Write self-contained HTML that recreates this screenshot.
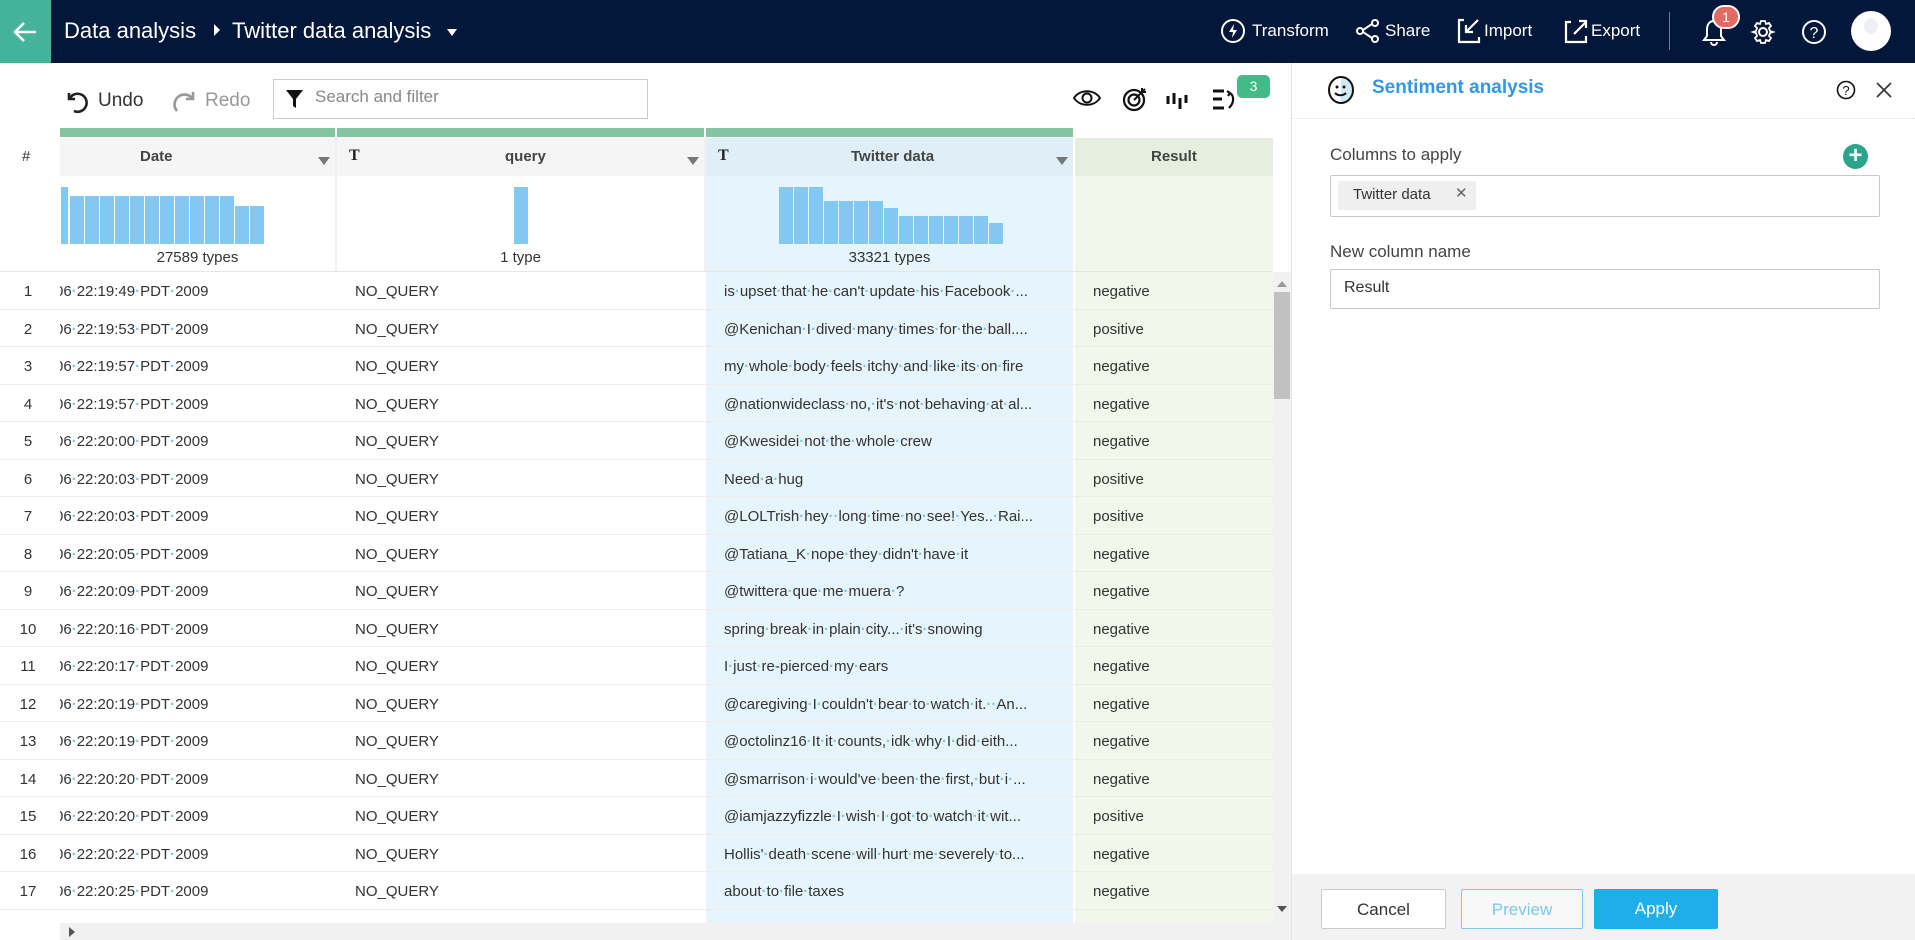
<!DOCTYPE html>
<html><head><meta charset="utf-8">
<style>
*{box-sizing:border-box;margin:0;padding:0}
body{width:1915px;height:940px;overflow:hidden;background:#fff;font-family:"Liberation Sans",sans-serif;color:#333;position:relative}
.a{position:absolute}
.hdr{left:0;top:0;width:1915px;height:63px;background:#03173a}
.hl{color:#fff;font-size:16px;top:21px}
.d{color:#7cc3ee}
.row{position:absolute;left:0;width:1273px;height:37.5px;border-bottom:1px solid #ececec;font-size:15px;line-height:40px}
.row span.n{position:absolute;left:0;width:56px;text-align:center}
.row .dt{position:absolute;left:60px;width:270px;overflow:hidden;white-space:nowrap;text-indent:-5px}
.row .q{position:absolute;left:355px}
.row .tw{position:absolute;left:724px;width:340px;white-space:nowrap;overflow:hidden}
.row .r{position:absolute;left:1093px}
.bar{position:absolute;background:#82c8f0;width:14px;bottom:696px}
.btn{position:absolute;top:889px;height:40px;font-size:17px;text-align:center;line-height:40px;border-radius:2px}
</style></head><body>
<div class="a" style="left:706px;top:138px;width:367px;height:785px;background:#e6f4fc"></div>
<div class="a" style="left:1075px;top:138px;width:198px;height:785px;background:#f1f7ea"></div>
<div class="a hdr"></div>
<div class="a" style="left:0;top:0;width:51px;height:63px;background:#45b39a"></div>
<svg class="a" style="left:12px;top:20px" width="26" height="24" viewBox="0 0 26 24"><path d="M24 12H4M12 3L3 12l9 9" stroke="#fff" stroke-width="2.5" fill="none"/></svg>
<div class="a" style="left:64px;top:18px;color:#fff;font-size:22px">Data analysis</div>
<div class="a" style="left:214px;top:24px;width:0;height:0;border-left:6px solid #fff;border-top:6px solid transparent;border-bottom:6px solid transparent"></div>
<div class="a" style="left:232px;top:18px;color:#fff;font-size:22px">Twitter data analysis</div>
<div class="a" style="left:447px;top:29px;width:0;height:0;border-top:7px solid #fff;border-left:5px solid transparent;border-right:5px solid transparent"></div>
<svg class="a" style="left:1220px;top:18px" width="26" height="26" viewBox="0 0 26 26"><circle cx="13" cy="13" r="11" stroke="#fff" stroke-width="2" fill="none"/><path d="M14 6l-5 8h4l-1 6 5-8h-4z" fill="#fff"/></svg>
<div class="a hl" style="left:1252px;font-size:17px">Transform</div>
<svg class="a" style="left:1355px;top:18px" width="26" height="26" viewBox="0 0 26 26"><circle cx="20" cy="5" r="3" stroke="#fff" stroke-width="2" fill="none"/><circle cx="5" cy="13" r="3" stroke="#fff" stroke-width="2" fill="none"/><circle cx="20" cy="21" r="3" stroke="#fff" stroke-width="2" fill="none"/><path d="M8 12l9-6M8 14l9 6" stroke="#fff" stroke-width="2"/></svg>
<div class="a hl" style="left:1385px;font-size:17px">Share</div>
<svg class="a" style="left:1456px;top:17px" width="26" height="28" viewBox="0 0 26 28"><path d="M8 3H3v22h20v-5M22 3L10 15M10 8v7h7" stroke="#fff" stroke-width="2.2" fill="none"/></svg>
<div class="a hl" style="left:1484px;font-size:17px">Import</div>
<svg class="a" style="left:1563px;top:17px" width="26" height="28" viewBox="0 0 26 28"><path d="M8 5H3v20h20v-6M11 17L23 5M16 4h7v7" stroke="#fff" stroke-width="2.2" fill="none"/></svg>
<div class="a hl" style="left:1591px;font-size:17px">Export</div>
<div class="a" style="left:1669px;top:12px;width:1px;height:38px;background:#6d7a92"></div>
<svg class="a" style="left:1702px;top:18px" width="24" height="28" viewBox="0 0 24 28"><path d="M12 3c-5 0-7 4-7 9v6l-3 4h20l-3-4v-6c0-5-2-9-7-9zM9 24a3 3 0 006 0" stroke="#fff" stroke-width="2" fill="none"/></svg>
<div class="a" style="left:1712px;top:5px;width:28px;height:24px;border-radius:12px;background:#e36a62;border:2px solid #fff;color:#fff;font-size:14px;text-align:center;line-height:20px">1</div>
<svg class="a" style="left:1750px;top:19px" width="26" height="26" viewBox="0 0 26 26"><circle cx="13" cy="13" r="4" stroke="#fff" stroke-width="2" fill="none"/><path d="M11 2h4l1 3 3-1 2 3-2 2 1 3 3 1v0l-3 1-1 3 2 2-2 3-3-1-1 3h-4l-1-3-3 1-2-3 2-2-1-3-3-1 3-1 1-3-2-2 2-3 3 1z" stroke="#fff" stroke-width="1.8" fill="none"/></svg>
<svg class="a" style="left:1801px;top:19px" width="26" height="26" viewBox="0 0 26 26"><circle cx="13" cy="13" r="11" stroke="#fff" stroke-width="2" fill="none"/><text x="13" y="19" fill="#fff" font-size="16" text-anchor="middle" font-family="Liberation Sans">?</text></svg>
<div class="a" style="left:1851px;top:11px;width:40px;height:40px;border-radius:50%;background:#fff;overflow:hidden"><div class="a" style="left:13px;top:7px;width:14px;height:16px;border-radius:50%;background:#eef0f5"></div></div>

<svg class="a" style="left:66px;top:88px" width="24" height="26" viewBox="0 0 24 26"><path d="M3 5v6h6M4 10a9 9 0 1 1 4 13" stroke="#222" stroke-width="2.6" fill="none"/></svg>
<div class="a" style="left:98px;top:90px;font-size:19px;color:#333">Undo</div>
<svg class="a" style="left:172px;top:88px" width="24" height="26" viewBox="0 0 24 26"><path d="M21 4v7h-7M20 10A9 9 0 1 0 5 23" stroke="#999" stroke-width="2.6" fill="none"/></svg>
<div class="a" style="left:205px;top:90px;font-size:19px;color:#999">Redo</div>
<div class="a" style="left:273px;top:79px;width:375px;height:40px;border:1px solid #ccc"></div>
<svg class="a" style="left:285px;top:88px" width="20" height="22" viewBox="0 0 20 22"><path d="M1 2h17l-7 9v9l-3-2v-7z" fill="#111"/></svg>
<div class="a" style="left:315px;top:87px;font-size:17px;color:#888">Search and filter</div>
<svg class="a" style="left:1072px;top:88px" width="30" height="20" viewBox="0 0 30 20"><path d="M2 10C8 1 22 1 28 10 22 19 8 19 2 10z" stroke="#111" stroke-width="2" fill="none"/><circle cx="15" cy="10" r="4.5" stroke="#111" stroke-width="2" fill="none"/></svg>
<svg class="a" style="left:1122px;top:86px" width="26" height="26" viewBox="0 0 26 26"><circle cx="12" cy="14" r="10" stroke="#111" stroke-width="2.2" fill="none"/><circle cx="12" cy="14" r="5.5" stroke="#111" stroke-width="2.2" fill="none"/><path d="M12 14L23 3M20 2v4h4" stroke="#111" stroke-width="2" fill="none"/></svg>
<svg class="a" style="left:1166px;top:90px" width="26" height="20" viewBox="0 0 26 20"><path d="M2 6v8M8 3v11M14 8v11M20 5v8" stroke="#111" stroke-width="3"/></svg>
<svg class="a" style="left:1212px;top:88px" width="26" height="24" viewBox="0 0 26 24"><path d="M1 3h11M1 11h9M1 20h11" stroke="#111" stroke-width="3"/><path d="M17 5c5 1 6 9 0 15M15 3l3 2-2 3" stroke="#111" stroke-width="2.2" fill="none"/></svg>
<div class="a" style="left:1237px;top:75px;width:33px;height:23px;background:#44bb86;border-radius:5px;color:#fff;font-size:14px;text-align:center;line-height:23px">3</div>

<div class="a" style="left:60px;top:128px;width:275px;height:9px;background:#85c4a0"></div>
<div class="a" style="left:337px;top:128px;width:367px;height:9px;background:#85c4a0"></div>
<div class="a" style="left:706px;top:128px;width:367px;height:9px;background:#85c4a0"></div>
<div class="a" style="left:0;top:138px;width:60px;height:133px;background:#fff"></div>
<div class="a" style="left:22px;top:148px;font-size:15px">#</div>
<div class="a" style="left:60px;top:138px;width:275px;height:38px;background:#f5f5f5"></div>
<div class="a" style="left:337px;top:138px;width:367px;height:38px;background:#f5f5f5"></div>
<div class="a" style="left:706px;top:138px;width:367px;height:38px;background:#dfeef7"></div>
<div class="a" style="left:1075px;top:138px;width:198px;height:38px;background:#e6eedf"></div>
<div class="a" style="left:335px;top:138px;width:2px;height:133px;background:#f0f0f0"></div>
<div class="a" style="left:704px;top:138px;width:2px;height:133px;background:#f0f0f0"></div>
<div class="a" style="left:140px;top:148px;font-size:15px;font-weight:bold;color:#444">Date</div>
<div class="a" style="left:505px;top:148px;font-size:15px;font-weight:bold;color:#444">query</div>
<div class="a" style="left:851px;top:148px;font-size:15px;font-weight:bold;color:#444">Twitter data</div>
<div class="a" style="left:1151px;top:148px;font-size:15px;font-weight:bold;color:#444">Result</div>
<div class="a" style="left:349px;top:147px;font-size:16px;font-weight:bold;font-family:'Liberation Serif',serif;color:#222">T</div>
<div class="a" style="left:718px;top:147px;font-size:16px;font-weight:bold;font-family:'Liberation Serif',serif;color:#222">T</div>
<div class="a" style="left:318px;top:157px;border-top:8px solid #777;border-left:6px solid transparent;border-right:6px solid transparent"></div>
<div class="a" style="left:687px;top:157px;border-top:8px solid #777;border-left:6px solid transparent;border-right:6px solid transparent"></div>
<div class="a" style="left:1056px;top:157px;border-top:8px solid #777;border-left:6px solid transparent;border-right:6px solid transparent"></div>
<div class="bar" style="left:61px;height:57px;width:7px"></div>
<div class="bar" style="left:70px;height:48px"></div><div class="bar" style="left:85px;height:48px"></div><div class="bar" style="left:100px;height:48px"></div><div class="bar" style="left:115px;height:48px"></div><div class="bar" style="left:130px;height:48px"></div><div class="bar" style="left:145px;height:48px"></div><div class="bar" style="left:160px;height:48px"></div><div class="bar" style="left:175px;height:48px"></div><div class="bar" style="left:190px;height:48px"></div><div class="bar" style="left:205px;height:48px"></div><div class="bar" style="left:220px;height:48px"></div><div class="bar" style="left:235px;height:38px"></div><div class="bar" style="left:250px;height:38px"></div>
<div class="bar" style="left:514px;height:57px"></div>
<div class="bar" style="left:779px;height:57px"></div><div class="bar" style="left:794px;height:57px"></div><div class="bar" style="left:809px;height:57px"></div><div class="bar" style="left:824px;height:43px"></div><div class="bar" style="left:839px;height:43px"></div><div class="bar" style="left:854px;height:43px"></div><div class="bar" style="left:869px;height:43px"></div><div class="bar" style="left:884px;height:36px"></div><div class="bar" style="left:899px;height:28px"></div><div class="bar" style="left:914px;height:28px"></div><div class="bar" style="left:929px;height:28px"></div><div class="bar" style="left:944px;height:28px"></div><div class="bar" style="left:959px;height:28px"></div><div class="bar" style="left:974px;height:28px"></div><div class="bar" style="left:989px;height:21px"></div>
<div class="a" style="left:60px;top:249px;width:275px;text-align:center;font-size:15px">27589 types</div>
<div class="a" style="left:337px;top:249px;width:367px;text-align:center;font-size:15px">1 type</div>
<div class="a" style="left:706px;top:249px;width:367px;text-align:center;font-size:15px">33321 types</div>
<div class="a" style="left:0;top:271px;width:1273px;height:1px;background:#e6e6e6"></div>

<div class="row" style="top:272px"><span class="n">1</span><span class="dt">06<b class="d">·</b>22:19:49<b class="d">·</b>PDT<b class="d">·</b>2009</span><span class="q">NO_QUERY</span><span class="tw">is<b class="d">·</b>upset<b class="d">·</b>that<b class="d">·</b>he<b class="d">·</b>can't<b class="d">·</b>update<b class="d">·</b>his<b class="d">·</b>Facebook<b class="d">·</b>...</span><span class="r">negative</span></div>
<div class="row" style="top:309.5px"><span class="n">2</span><span class="dt">06<b class="d">·</b>22:19:53<b class="d">·</b>PDT<b class="d">·</b>2009</span><span class="q">NO_QUERY</span><span class="tw">@Kenichan<b class="d">·</b>I<b class="d">·</b>dived<b class="d">·</b>many<b class="d">·</b>times<b class="d">·</b>for<b class="d">·</b>the<b class="d">·</b>ball....</span><span class="r">positive</span></div>
<div class="row" style="top:347px"><span class="n">3</span><span class="dt">06<b class="d">·</b>22:19:57<b class="d">·</b>PDT<b class="d">·</b>2009</span><span class="q">NO_QUERY</span><span class="tw">my<b class="d">·</b>whole<b class="d">·</b>body<b class="d">·</b>feels<b class="d">·</b>itchy<b class="d">·</b>and<b class="d">·</b>like<b class="d">·</b>its<b class="d">·</b>on<b class="d">·</b>fire</span><span class="r">negative</span></div>
<div class="row" style="top:384.5px"><span class="n">4</span><span class="dt">06<b class="d">·</b>22:19:57<b class="d">·</b>PDT<b class="d">·</b>2009</span><span class="q">NO_QUERY</span><span class="tw">@nationwideclass<b class="d">·</b>no,<b class="d">·</b>it's<b class="d">·</b>not<b class="d">·</b>behaving<b class="d">·</b>at<b class="d">·</b>al...</span><span class="r">negative</span></div>
<div class="row" style="top:422px"><span class="n">5</span><span class="dt">06<b class="d">·</b>22:20:00<b class="d">·</b>PDT<b class="d">·</b>2009</span><span class="q">NO_QUERY</span><span class="tw">@Kwesidei<b class="d">·</b>not<b class="d">·</b>the<b class="d">·</b>whole<b class="d">·</b>crew</span><span class="r">negative</span></div>
<div class="row" style="top:459.5px"><span class="n">6</span><span class="dt">06<b class="d">·</b>22:20:03<b class="d">·</b>PDT<b class="d">·</b>2009</span><span class="q">NO_QUERY</span><span class="tw">Need<b class="d">·</b>a<b class="d">·</b>hug</span><span class="r">positive</span></div>
<div class="row" style="top:497px"><span class="n">7</span><span class="dt">06<b class="d">·</b>22:20:03<b class="d">·</b>PDT<b class="d">·</b>2009</span><span class="q">NO_QUERY</span><span class="tw">@LOLTrish<b class="d">·</b>hey<b class="d">··</b>long<b class="d">·</b>time<b class="d">·</b>no<b class="d">·</b>see!<b class="d">·</b>Yes..<b class="d">·</b>Rai...</span><span class="r">positive</span></div>
<div class="row" style="top:534.5px"><span class="n">8</span><span class="dt">06<b class="d">·</b>22:20:05<b class="d">·</b>PDT<b class="d">·</b>2009</span><span class="q">NO_QUERY</span><span class="tw">@Tatiana_K<b class="d">·</b>nope<b class="d">·</b>they<b class="d">·</b>didn't<b class="d">·</b>have<b class="d">·</b>it</span><span class="r">negative</span></div>
<div class="row" style="top:572px"><span class="n">9</span><span class="dt">06<b class="d">·</b>22:20:09<b class="d">·</b>PDT<b class="d">·</b>2009</span><span class="q">NO_QUERY</span><span class="tw">@twittera<b class="d">·</b>que<b class="d">·</b>me<b class="d">·</b>muera<b class="d">·</b>?</span><span class="r">negative</span></div>
<div class="row" style="top:609.5px"><span class="n">10</span><span class="dt">06<b class="d">·</b>22:20:16<b class="d">·</b>PDT<b class="d">·</b>2009</span><span class="q">NO_QUERY</span><span class="tw">spring<b class="d">·</b>break<b class="d">·</b>in<b class="d">·</b>plain<b class="d">·</b>city...<b class="d">·</b>it's<b class="d">·</b>snowing</span><span class="r">negative</span></div>
<div class="row" style="top:647px"><span class="n">11</span><span class="dt">06<b class="d">·</b>22:20:17<b class="d">·</b>PDT<b class="d">·</b>2009</span><span class="q">NO_QUERY</span><span class="tw">I<b class="d">·</b>just<b class="d">·</b>re-pierced<b class="d">·</b>my<b class="d">·</b>ears</span><span class="r">negative</span></div>
<div class="row" style="top:684.5px"><span class="n">12</span><span class="dt">06<b class="d">·</b>22:20:19<b class="d">·</b>PDT<b class="d">·</b>2009</span><span class="q">NO_QUERY</span><span class="tw">@caregiving<b class="d">·</b>I<b class="d">·</b>couldn't<b class="d">·</b>bear<b class="d">·</b>to<b class="d">·</b>watch<b class="d">·</b>it.<b class="d">··</b>An...</span><span class="r">negative</span></div>
<div class="row" style="top:722px"><span class="n">13</span><span class="dt">06<b class="d">·</b>22:20:19<b class="d">·</b>PDT<b class="d">·</b>2009</span><span class="q">NO_QUERY</span><span class="tw">@octolinz16<b class="d">·</b>It<b class="d">·</b>it<b class="d">·</b>counts,<b class="d">·</b>idk<b class="d">·</b>why<b class="d">·</b>I<b class="d">·</b>did<b class="d">·</b>eith...</span><span class="r">negative</span></div>
<div class="row" style="top:759.5px"><span class="n">14</span><span class="dt">06<b class="d">·</b>22:20:20<b class="d">·</b>PDT<b class="d">·</b>2009</span><span class="q">NO_QUERY</span><span class="tw">@smarrison<b class="d">·</b>i<b class="d">·</b>would've<b class="d">·</b>been<b class="d">·</b>the<b class="d">·</b>first,<b class="d">·</b>but<b class="d">·</b>i<b class="d">·</b>...</span><span class="r">negative</span></div>
<div class="row" style="top:797px"><span class="n">15</span><span class="dt">06<b class="d">·</b>22:20:20<b class="d">·</b>PDT<b class="d">·</b>2009</span><span class="q">NO_QUERY</span><span class="tw">@iamjazzyfizzle<b class="d">·</b>I<b class="d">·</b>wish<b class="d">·</b>I<b class="d">·</b>got<b class="d">·</b>to<b class="d">·</b>watch<b class="d">·</b>it<b class="d">·</b>wit...</span><span class="r">positive</span></div>
<div class="row" style="top:834.5px"><span class="n">16</span><span class="dt">06<b class="d">·</b>22:20:22<b class="d">·</b>PDT<b class="d">·</b>2009</span><span class="q">NO_QUERY</span><span class="tw">Hollis'<b class="d">·</b>death<b class="d">·</b>scene<b class="d">·</b>will<b class="d">·</b>hurt<b class="d">·</b>me<b class="d">·</b>severely<b class="d">·</b>to...</span><span class="r">negative</span></div>
<div class="row" style="top:872px"><span class="n">17</span><span class="dt">06<b class="d">·</b>22:20:25<b class="d">·</b>PDT<b class="d">·</b>2009</span><span class="q">NO_QUERY</span><span class="tw">about<b class="d">·</b>to<b class="d">·</b>file<b class="d">·</b>taxes</span><span class="r">negative</span></div>
<div class="a" style="left:1273px;top:272px;width:18px;height:651px;background:#f1f1f1"></div>
<div class="a" style="left:1277px;top:281px;border-bottom:6px solid #999;border-left:5px solid transparent;border-right:5px solid transparent"></div>
<div class="a" style="left:1274px;top:292px;width:16px;height:107px;background:#c1c1c1"></div>
<div class="a" style="left:1277px;top:906px;border-top:6px solid #555;border-left:5px solid transparent;border-right:5px solid transparent"></div>
<div class="a" style="left:60px;top:923px;width:1231px;height:17px;background:#f1f1f1"></div>
<div class="a" style="left:69px;top:927px;border-left:6px solid #555;border-top:5px solid transparent;border-bottom:5px solid transparent"></div>
<div class="a" style="left:0;top:923px;width:60px;height:17px;background:#fff"></div>

<div class="a" style="left:1291px;top:63px;width:624px;height:877px;background:#fff;border-left:1px solid #e4e4e4"></div>
<div class="a" style="left:1292px;top:118px;width:623px;border-top:1px dotted #ddd"></div>
<svg class="a" style="left:1327px;top:75px" width="28" height="30" viewBox="0 0 28 30"><path d="M14 2a12 13 0 0 1 0 26z" fill="#cfe9f7"/><ellipse cx="14" cy="15" rx="12" ry="13" stroke="#111" stroke-width="2" fill="none"/><circle cx="10" cy="12" r="1.5" fill="#111"/><circle cx="17" cy="12" r="1.5" fill="#111"/><path d="M8 18c3 3 8 3 11 0" stroke="#111" stroke-width="2" fill="none"/></svg>
<div class="a" style="left:1372px;top:77px;font-size:19px;font-weight:bold;color:#3398e3">Sentiment analysis</div>
<svg class="a" style="left:1836px;top:80px" width="20" height="20" viewBox="0 0 20 20"><circle cx="10" cy="10" r="8.5" stroke="#111" stroke-width="1.6" fill="none"/><text x="10" y="15" font-size="13" text-anchor="middle" fill="#111" font-family="Liberation Sans">?</text></svg>
<svg class="a" style="left:1875px;top:81px" width="18" height="18" viewBox="0 0 18 18"><path d="M2 2l14 14M16 2L2 16" stroke="#333" stroke-width="1.6"/></svg>
<div class="a" style="left:1330px;top:145px;font-size:17px;color:#444">Columns to apply</div>
<div class="a" style="left:1843px;top:144px;width:25px;height:25px;border-radius:50%;background:#2aa58b;color:#fff;font-size:24px;text-align:center;line-height:24px;font-weight:bold">+</div>
<div class="a" style="left:1330px;top:175px;width:550px;height:42px;border:1px solid #c8c8c8;border-radius:2px"></div>
<div class="a" style="left:1338px;top:181px;width:138px;height:29px;background:#efefef"></div>
<div class="a" style="left:1353px;top:186px;font-size:15px;color:#333">Twitter data</div>
<div class="a" style="left:1455px;top:184px;font-size:15px;color:#666">✕</div>
<div class="a" style="left:1330px;top:242px;font-size:17px;color:#444">New column name</div>
<div class="a" style="left:1330px;top:269px;width:550px;height:40px;border:1px solid #c8c8c8;border-radius:2px"></div>
<div class="a" style="left:1344px;top:279px;font-size:16px;color:#333">Result</div>
<div class="a" style="left:1292px;top:874px;width:623px;height:66px;background:#f2f2f2"></div>
<div class="btn" style="left:1321px;width:125px;background:#fff;border:1px solid #ccc;color:#333">Cancel</div>
<div class="btn" style="left:1461px;width:122px;background:#f8f8f8;border:1px solid #7cc8ee;color:#7cc8ee">Preview</div>
<div class="btn" style="left:1594px;width:124px;background:#1eaeea;color:#fff">Apply</div>
</body></html>
